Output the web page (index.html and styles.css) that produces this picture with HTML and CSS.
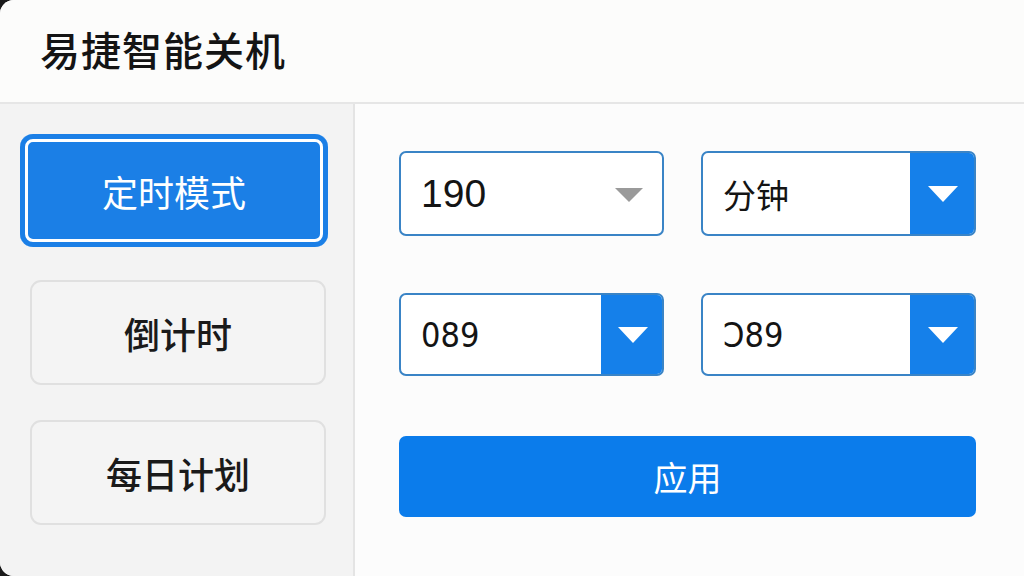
FILE: index.html
```html
<!DOCTYPE html>
<html lang="zh-CN">
<head>
<meta charset="utf-8">
<title>易捷智能关机</title>
<link rel="stylesheet" href="styles.css">
</head>
<body>
<div class="app">
  <header class="header">
    <h1 class="title">易捷智能关机</h1>
  </header>
  <div class="main">
    <nav class="sidebar">
      <button class="mode active">定时模式</button>
      <button class="mode">倒计时</button>
      <button class="mode">每日计划</button>
    </nav>
    <section class="content">
      <div class="grid">
        <div class="select narrow">
          <span class="value">190</span>
          <svg class="tri-gray" width="28" height="14" viewBox="0 0 28 14"><polygon points="0,0 28,0 14,14" fill="#9a9a9a"/></svg>
        </div>
        <div class="select wide">
          <span class="value">分钟</span>
          <span class="drop drop-wide"><svg width="30" height="16" viewBox="0 0 30 16"><polygon points="0,0 30,0 15,16" fill="#fff"/></svg></span>
        </div>
        <div class="select narrow row2">
          <span class="value cond">089</span>
          <span class="drop drop-narrow"><svg width="30" height="16" viewBox="0 0 30 16"><polygon points="0,0 30,0 15,16" fill="#fff"/></svg></span>
        </div>
        <div class="select wide row2">
          <span class="value cond">Ɔ89</span>
          <span class="drop drop-wide"><svg width="30" height="16" viewBox="0 0 30 16"><polygon points="0,0 30,0 15,16" fill="#fff"/></svg></span>
        </div>
      </div>
      <button class="apply">应用</button>
    </section>
  </div>
</div>
</body>
</html>
```

FILE: styles.css
```css
* { box-sizing: border-box; }
html, body {
  margin: 0;
  padding: 0;
  width: 1024px;
  height: 576px;
  overflow: hidden;
  background: #1a1a1a;
}
body {
  font-family: "Noto Sans CJK SC", "Noto Sans", "Liberation Sans", sans-serif;
}
.app {
  width: 1024px;
  height: 576px;
  background: #fbfbfb;
  border-radius: 14px 0 0 14px;
  overflow: hidden;
  display: flex;
  flex-direction: column;
}
.header {
  height: 104px;
  flex: none;
  background: #fcfcfb;
  border-bottom: 2px solid #e6e6e6;
  display: flex;
  align-items: center;
  padding-left: 40px;
}
.title {
  margin: 0;
  font-size: 40px;
  font-weight: 500;
  color: #141414;
  letter-spacing: 1px;
  line-height: 1;
  padding-bottom: 4px;
}
.main {
  flex: 1;
  display: flex;
}
.sidebar {
  width: 355px;
  flex: none;
  background: #f3f3f3;
  border-right: 2px solid #e4e4e4;
  display: flex;
  flex-direction: column;
  padding: 30px 27px 0 30px;
}
.mode {
  font-family: "Noto Sans CJK SC", sans-serif;
  font-size: 36px;
  font-weight: 500;
  color: #1a1a1a;
  background: #f4f4f4;
  border: 2px solid #e0e0e0;
  border-radius: 11px;
  height: 105px;
  margin-bottom: 35px;
  padding: 0;
  cursor: pointer;
}
.mode.active {
  height: 113px;
  margin: 0 -2px 33px -10px;
  background: #1b7fe6;
  border: none;
  color: #fff;
  font-weight: 400;
  border-radius: 13px;
  box-shadow: inset 0 0 0 5px #1b7fe6, inset 0 0 0 8px #ffffff;
}
.content {
  flex: 1;
  background: #fcfcfc;
  padding: 47px 0 0 44px;
}
.grid {
  display: grid;
  grid-template-columns: 265px 275px;
  column-gap: 37px;
  row-gap: 57px;
}
.select {
  height: 85px;
  background: #fff;
  border: 2px solid #3a84c6;
  border-radius: 7px;
  display: flex;
  align-items: center;
  overflow: hidden;
  position: relative;
}
.select.row2 {
  height: 83px;
}
.value {
  font-family: "Liberation Sans", "Noto Sans CJK SC", sans-serif;
  font-size: 39px;
  color: #141414;
  padding-left: 20px;
  flex: 1;
}
.select.wide .value {
  font-family: "Noto Sans CJK SC", sans-serif;
  font-size: 33px;
}
.value.cond,
.select.wide .value.cond {
  font-family: "DejaVu Sans Condensed", "DejaVu Sans", "Liberation Sans", sans-serif;
  font-size: 34px;
}
.tri-gray {
  margin-right: 19px;
  margin-top: 2px;
}
.drop {
  align-self: stretch;
  background: #1580ea;
  display: flex;
  align-items: center;
  justify-content: center;
  margin: -2px -2px -2px 0;
}
.drop-wide { width: 66px; }
.drop-narrow { width: 63px; }
.apply {
  display: block;
  width: 577px;
  height: 81px;
  margin-top: 60px;
  background: #0b7ceb;
  border: none;
  border-radius: 7px;
  color: #fff;
  font-family: "Noto Sans CJK SC", sans-serif;
  font-size: 34px;
  cursor: pointer;
}
```
